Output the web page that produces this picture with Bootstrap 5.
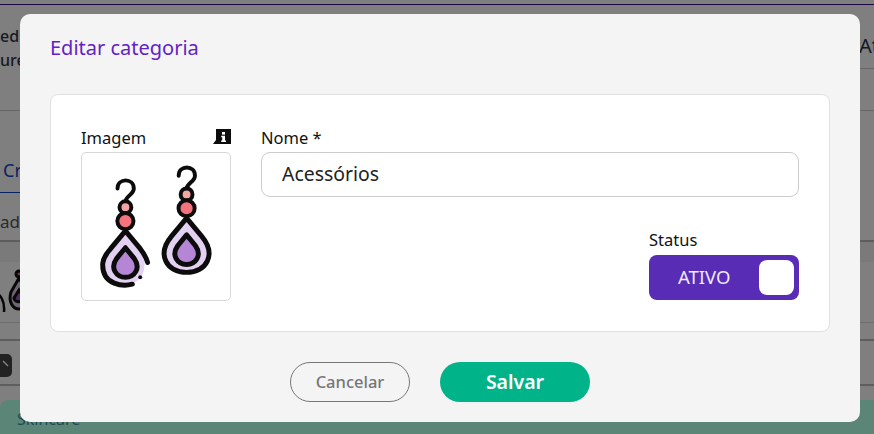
<!DOCTYPE html>
<html lang="pt">
<head>
<meta charset="utf-8">
<title>Editar categoria</title>
<link href="https://cdn.jsdelivr.net/npm/bootstrap@5.3.0/dist/css/bootstrap.min.css" rel="stylesheet">
<style>
html,body{height:434px;overflow:hidden;}
body{font-family:"Noto Sans",sans-serif;background:#fff;color:#222;}
.back-top{height:5px;border-bottom:1px solid #3c0f8a;}
.back-head{height:106px;border-bottom:1px solid #ccc;}
.back-left{font-size:16px;line-height:24px;padding-top:19px;width:40px;font-weight:500;color:#334;}
.back-right{width:15px;overflow:hidden;}
.back-right-a{height:64px;border-bottom:1px solid #ccc;font-size:20px;line-height:24px;padding-top:29px;color:#234;white-space:nowrap;}
.back-tab{height:82px;border-bottom:1px solid #0d47c9;width:60px;padding:47px 0 0 3px;font-size:18px;line-height:24px;color:#0d47c9;}
.back-thead{height:49px;border-bottom:2px solid #bbb;font-size:17px;color:#555;line-height:58px;background:#fff;}
.back-band{height:20px;background:#f4f4f4;}
.back-img{height:61px;border-bottom:1px solid #ddd;}
.back-row2{height:18px;border-bottom:2px solid #bbb;}
.back-row3{height:45px;border-bottom:2px solid #bbb;padding-top:13px;}
.back-btn{width:12px;height:23px;background:#444;border-radius:0 5px 5px 0;display:block;}
.back-toast{position:fixed;left:0;right:0;top:400px;height:34px;background:#5a8577;border-radius:8px 0 0 0;padding:8px 0 0 17px;font-size:16px;line-height:22px;color:#1d4c55;z-index:1051;}
.edit-dialog{max-width:840px;width:840px;margin:14px 20px 0;}
.edit-box{background:#f4f4f4;border:0;border-radius:10px;height:408px;}
.edit-head{border:0;height:80px;padding:0 30px 12px;}
.edit-title{color:#6322c4;font-size:20px;line-height:24px;font-weight:400;}
.edit-body{padding:0 30px;flex:0 0 auto;}
.edit-card{height:238px;border-radius:8px;border-color:#e0e0e0;padding:33px 30px 0 30px;}
.edit-cols{gap:30px;}
.pic-col{width:150px;flex:none;}
.lbl{font-size:16.500px;line-height:20px;color:#111;margin:0;height:18px;}
.pic-box{width:150px;height:149px;border:1px solid #d8d8d8;border-radius:5px;display:block;background:#fff;margin-top:6px;}
.name-input{height:45px;border-radius:9px;border-color:#ccc;font-size:19.400px;line-height:24px;padding:0 20px 3px;color:#222;margin-top:6px;}
.status-col{width:150px;margin-top:33px;}
.status-lbl{margin-bottom:7px;}
.status-tog{height:45px;background:#582cb5;border-radius:8px;padding:5px;color:#efe9fb;font-size:18.500px;line-height:24px;}
.status-txt{margin-left:24px;margin-top:-2px;}
.status-knob{width:35px;height:35px;border-radius:8px;background:#fff;}
.edit-foot{border:0;padding:30px 0 0;gap:30px;}
.edit-foot .btn{margin:0;height:40px;border-radius:20px;padding:0;}
.btn-cancel{width:120px;border:1px solid #777;color:#777;font-size:16.500px;font-weight:500;background:transparent;}
.btn-save{width:150px;background:#00b388;border:0;color:#fff;font-size:19.500px;font-weight:600;}
</style>
</head>
<body>
<div class="back-top"></div>
<div class="back-head d-flex justify-content-between">
  <div class="back-left">ed<br>ure</div>
  <div class="back-right"><div class="back-right-a">At</div></div>
</div>
<div class="back-tab overflow-hidden">Criar</div>
<div class="back-thead overflow-hidden">ade</div>
<div class="back-band"></div>
<div class="back-img d-flex overflow-hidden">
  <svg width="60" height="60" viewBox="0 0 60 60" aria-hidden="true">
    <path d="M-6 30C1 32 5 40 4 50" fill="none" stroke="#111" stroke-width="2.500"/>
    <g stroke="#111" stroke-width="3">
      <circle cx="19" cy="12" r="3" fill="#d97474"/>
      <path d="M19 16L11 30C8 40 13 47 19 47C26 47 31 40 27 30Z" fill="#dcc9ec"/>
      <path d="M19 28L14 36C14 41 24 41 24 36Z" fill="#8f5db8"/>
    </g>
  </svg>
</div>
<div class="back-row2"></div>
<div class="back-row3">
  <svg class="back-btn" viewBox="0 0 12 23" aria-hidden="true">
    <path d="M3 7L8 12" stroke="#fff" stroke-width="1.500" fill="none"/>
  </svg>
</div>
<div class="back-toast">Skincare</div>

<div class="modal-backdrop show"></div>
<div class="modal d-block" tabindex="-1">
  <div class="modal-dialog edit-dialog">
    <div class="modal-content edit-box">
      <div class="modal-header edit-head">
        <h5 class="modal-title edit-title">Editar categoria</h5>
      </div>
      <div class="modal-body edit-body">
        <div class="card edit-card">
          <div class="d-flex edit-cols">
            <div class="pic-col">
              <div class="d-flex justify-content-between align-items-center">
                <label class="lbl">Imagem</label>
                <svg width="18" height="16" viewBox="0 0 18 16" aria-hidden="true">
                  <path d="M3 0H18V15H0L3 11Z" fill="#0c0c0c"/>
                  <rect x="9" y="3" width="3" height="2.600" fill="#fff"/>
                  <path d="M8.200 6.800H12V11.400H13V13H8.200V11.400H9.200V8.300H8.200Z" fill="#fff"/>
                </svg>
              </div>
              <svg class="pic-box" viewBox="0 0 150 149" role="img" aria-label="Brincos">
                <g transform="translate(44 0)" stroke="#0c0c0c" stroke-linecap="round" stroke-linejoin="round">
                  <path d="M0 81L-15 99C-26 113 -22 133 0 133C15 133 21 120 19 109L15 99Z" fill="#e3d1f1" stroke="none"/>
                  <path d="M7 133C-1 135 -24 135 -23 112C-22 104 -18 101 -15 97L0 79L15 97C18 101 21 105 22.500 111" fill="none" stroke-width="5"/>
                  <path d="M0 96L-9 107C-16 117 -9 126 0 126C9 126 16 117 9 107Z" fill="#b586d6" stroke-width="5"/>
                  <circle cx="15" cy="126" r="2" fill="#0c0c0c" stroke="none"/>
                  <path d="M-8 36C-8 25 8.500 25 8.500 36C8.500 42 1 43 0 49" fill="none" stroke-width="4"/>
                  <circle cx="0" cy="55" r="6" fill="#f5a4a4" stroke-width="4"/>
                  <circle cx="0" cy="69" r="8.200" fill="#f6727c" stroke-width="4"/>
                </g>
                <g transform="translate(106 -13)" stroke="#0c0c0c" stroke-linecap="round" stroke-linejoin="round">
                  <path d="M0 79L-15 97C-31 116 -20 134 0 134C20 134 31 116 15 97Z" fill="#e3d1f1" stroke-width="5"/>
                  <path d="M0 96L-9 107C-16 117 -9 126 0 126C9 126 16 117 9 107Z" fill="#b586d6" stroke-width="5"/>
                  <path d="M-8 36C-8 25 8.500 25 8.500 36C8.500 42 1 43 0 49" fill="none" stroke-width="4"/>
                  <circle cx="0" cy="55" r="6" fill="#f5a4a4" stroke-width="4"/>
                  <circle cx="0" cy="69" r="8.200" fill="#f6727c" stroke-width="4"/>
                </g>
              </svg>
            </div>
            <div class="flex-grow-1">
              <label class="lbl d-block" for="nome">Nome *</label>
              <input id="nome" class="form-control name-input" value="Acessórios">
              <div class="status-col ms-auto">
                <label class="lbl d-block status-lbl">Status</label>
                <div class="status-tog d-flex align-items-center justify-content-between">
                  <span class="status-txt">ATIVO</span>
                  <span class="status-knob"></span>
                </div>
              </div>
            </div>
          </div>
        </div>
      </div>
      <div class="modal-footer edit-foot justify-content-center">
        <button type="button" class="btn btn-cancel">Cancelar</button>
        <button type="button" class="btn btn-save">Salvar</button>
      </div>
    </div>
  </div>
</div>
</body>
</html>
